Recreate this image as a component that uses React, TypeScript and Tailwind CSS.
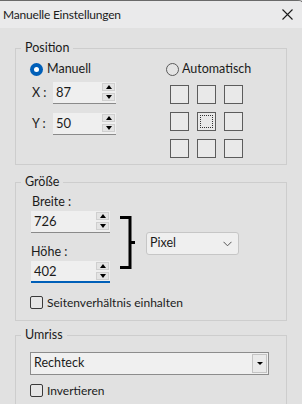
import React from "react";

function SpinBtn({ up }: { up?: boolean }) {
  return (
    <div className="w-[13px] h-[8px] bg-[#e4e4e4] border border-[#cfcfcf] flex items-center justify-center">
      {up ? (
        <div className="w-0 h-0 border-x-[3px] border-x-transparent border-b-[4px] border-b-black" />
      ) : (
        <div className="w-0 h-0 border-x-[3px] border-x-transparent border-t-[4px] border-t-black" />
      )}
    </div>
  );
}

function SpinBox({ value, wide, focused }: { value: string; wide?: boolean; focused?: boolean }) {
  return (
    <div
      className={`${wide ? "w-[79px]" : "w-[63px]"} h-[22px] flex items-start bg-[#efefef] ${
        focused ? "border-b-2 border-[#005fb8]" : "border-b border-[#8a8a8a]"
      }`}
    >
      <span className="pl-[3px] leading-[21px] text-[13px]">{value}</span>
      <div className="ml-auto mr-[1px] mt-[1px] flex flex-col gap-[2px]">
        <SpinBtn up />
        <SpinBtn />
      </div>
    </div>
  );
}

function Square({ focus }: { focus?: boolean }) {
  return (
    <div className="w-[19px] h-[19px] border-[1.5px] border-[#5c5c5c] bg-[#e9e9e9] p-[2px]">
      {focus && <div className="w-full h-full border border-dotted border-[#333]" />}
    </div>
  );
}

function CheckBox({ label }: { label: string }) {
  return (
    <div className="flex items-center h-[13px]">
      <div className="w-[13px] h-[13px] rounded-[2px] border border-[#3a3a3a] bg-[#e6e6e6]" />
      <span className="ml-[4px] leading-[13px]">{label}</span>
    </div>
  );
}

export default function App() {
  return (
    <div className="w-[302px] h-[404px] overflow-hidden bg-[#e1e1e1]">
      <div className="w-[306px] h-[404px] bg-[#e1e1e1] border-t border-r border-[#6a6a6a] rounded-tr-[8px] overflow-hidden text-[12px] text-[#1b1b1b] [font-family:Lato,sans-serif]">
        {/* Title bar */}
        <div className="h-[27px] bg-[#eaeaeb] flex items-center">
          <span className="pl-[3px] text-[12px] tracking-[-0.2px] leading-[27px]">Manuelle Einstellungen</span>
          <svg className="ml-auto mr-[12px]" width="11" height="11" viewBox="0 0 11 11">
            <path d="M0.5 0.5 L10.5 10.5 M10.5 0.5 L0.5 10.5" stroke="#1b1b1b" strokeWidth="1.1" />
          </svg>
        </div>

        {/* Position */}
        <fieldset className="mt-[11px] mx-[15px] w-[272px] border border-[#cdcdcd] pb-[6px]">
          <legend className="ml-[5px] px-[4px] text-[12.5px] leading-[18px]">Position</legend>
          <div className="flex pl-[14px]">
            <div className="w-[136px] flex flex-col">
              <div className="mt-[5px] flex items-center h-[14px]">
                <div className="w-[13px] h-[13px] rounded-full bg-[#005fb8] flex items-center justify-center">
                  <div className="w-[5px] h-[5px] rounded-full bg-white" />
                </div>
                <span className="ml-[4px] text-[12.5px]">Manuell</span>
              </div>
              <div className="mt-[6px] flex items-center">
                <span className="w-[23px] pl-[2px] text-[12.5px]">X :</span>
                <SpinBox value="87" />
              </div>
              <div className="mt-[9px] flex items-center">
                <span className="w-[23px] pl-[2px] text-[12.5px]">Y :</span>
                <SpinBox value="50" />
              </div>
            </div>
            <div className="flex flex-col">
              <div className="mt-[5px] flex items-center h-[14px]">
                <div className="w-[13px] h-[13px] rounded-full border border-[#5a5a5a] bg-[#e4e4e4]" />
                <span className="ml-[3px] text-[12.5px]">Automatisch</span>
              </div>
              <div className="mt-[9px] ml-[4px] grid grid-cols-3 gap-[8px] w-max">
                <Square />
                <Square />
                <Square />
                <Square />
                <Square focus />
                <Square />
                <Square />
                <Square />
                <Square />
              </div>
            </div>
          </div>
        </fieldset>

        {/* Größe */}
        <fieldset className="mt-[8px] mx-[15px] w-[272px] border border-[#cdcdcd] pb-[11px]">
          <legend className="ml-[5px] px-[4px] text-[12.5px] leading-[18px]">Größe</legend>
          <div className="pl-[15px] flex items-start">
            <div className="flex flex-col">
              <div className="mt-[3px] h-[16px] leading-[16px] pl-[1px] text-[12.5px]">Breite :</div>
              <div className="mt-[1px]">
                <SpinBox value="726" wide />
              </div>
              <div className="mt-[11px] h-[16px] leading-[16px] text-[12.5px]">Höhe :</div>
              <div className="mt-[1px]">
                <SpinBox value="402" wide focused />
              </div>
            </div>
            <svg className="ml-[10px] mt-[25px]" width="16" height="53" viewBox="0 0 16 53">
              <path d="M0 1.5 H10 M0 51.5 H10 M10 0 V53 M10 26.5 H15" stroke="#000" strokeWidth="3" fill="none" />
            </svg>
            <div className="ml-[10px] mt-[41px] w-[93px] h-[23px] bg-[#efefef] border border-[#c6c6c6] rounded-[3px] flex items-center">
              <span className="pl-[3px] text-[12.5px]">Pixel</span>
              <svg className="ml-auto mr-[6px]" width="9" height="6" viewBox="0 0 9 6">
                <path d="M0.5 0.8 L4.5 4.8 L8.5 0.8" stroke="#555" strokeWidth="1" fill="none" />
              </svg>
            </div>
          </div>
          <div className="pl-[14px] mt-[13px]">
            <CheckBox label="Seitenverhältnis einhalten" />
          </div>
        </fieldset>

        {/* Umriss */}
        <fieldset className="mt-[5px] mx-[15px] w-[272px] border border-[#cdcdcd] pb-[20px]">
          <legend className="ml-[5px] px-[4px] text-[12.5px] leading-[18px]">Umriss</legend>
          <div className="pl-[14px]">
            <div className="mt-[8px] w-[239px] h-[23px] bg-[#f0f0f0] border border-[#8c8c8c] flex items-center">
              <span className="pl-[3px] text-[12.5px]">Rechteck</span>
              <div className="ml-auto mr-[1px] w-[15px] h-[19px] border border-[#c4c4c4] bg-[#eaeaea] flex items-center justify-center">
                <div className="w-0 h-0 border-x-[3px] border-x-transparent border-t-[3px] border-t-black" />
              </div>
            </div>
            <div className="mt-[9px]">
              <CheckBox label="Invertieren" />
            </div>
          </div>
        </fieldset>
      </div>
    </div>
  );
}
